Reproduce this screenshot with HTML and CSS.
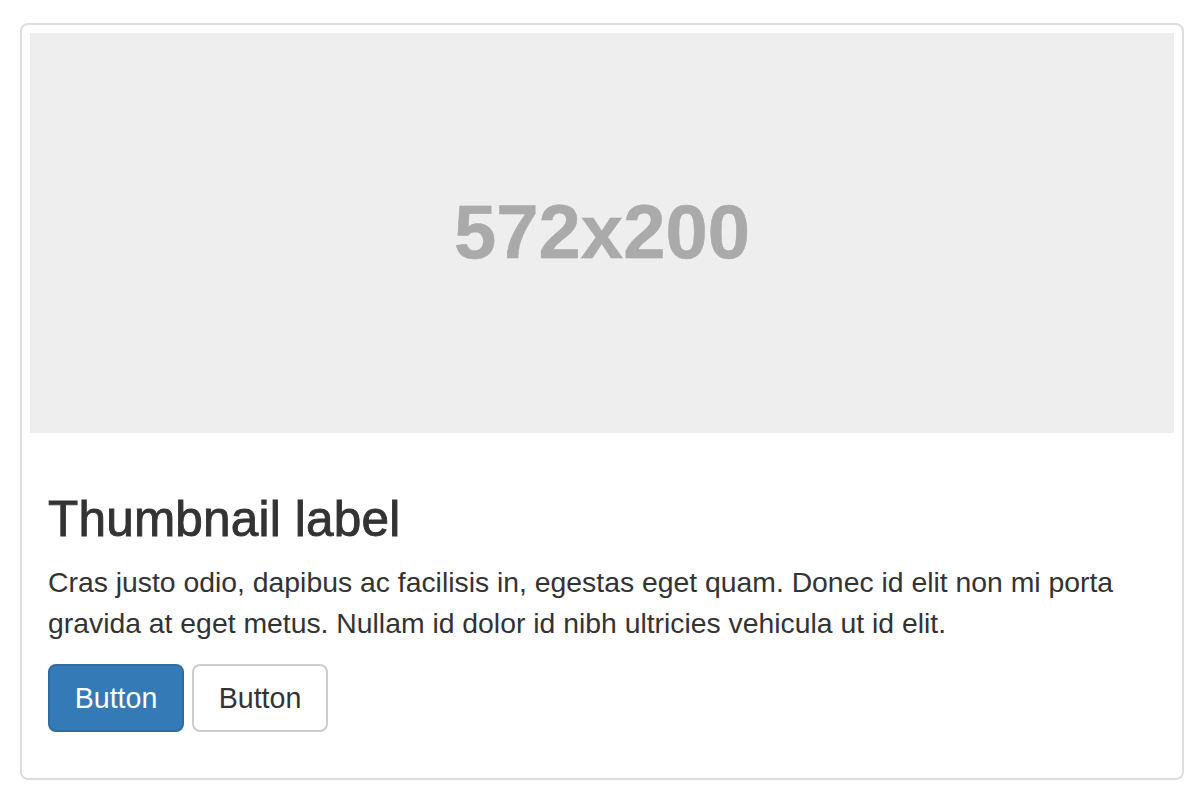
FILE: index.html
```html
<!DOCTYPE html>
<html>
<head>
<meta charset="utf-8">
<link rel="stylesheet" href="styles.css">
</head>
<body>
<div class="page">
  <div class="thumbnail">
    <div class="holder"><span class="holder-text">572x200</span></div>
    <div class="caption">
      <h3 class="title">Thumbnail label</h3>
      <p class="text">Cras justo odio, dapibus ac facilisis in, egestas eget quam. Donec id elit non mi porta gravida at eget metus. Nullam id dolor id nibh ultricies vehicula ut id elit.</p>
      <p class="actions"><a class="btn btn-primary">Button</a><a class="btn btn-default">Button</a></p>
    </div>
  </div>
</div>
</body>
</html>
```

FILE: styles.css
```css
* { box-sizing: border-box; }
html, body { margin: 0; padding: 0; background: #fff; }
body {
  font-family: "Liberation Sans", Arial, Helvetica, sans-serif;
  color: #333;
}
.page {
  padding: 23px 20px 0 20px;
}
.thumbnail {
  border: 2px solid #ddd;
  border-radius: 8px;
  padding: 8px;
  background: #fff;
}
.holder {
  height: 400px;
  background: #eee;
  display: flex;
  align-items: center;
  justify-content: center;
}
.holder-text {
  font-weight: bold;
  font-size: 76px;
  color: #aaa;
  margin-top: -3px;
  -webkit-text-stroke: 0.5px #aaa;
}
.caption {
  padding: 18px;
}
.title {
  margin: 41px 0 16px 0;
  font-size: 49.5px;
  font-weight: 500;
  line-height: 1.1;
  letter-spacing: 0.2px;
  -webkit-text-stroke: 0.9px #333;
}
.text {
  margin: 0 0 20px 0;
  font-size: 28.35px;
  line-height: 41px;
}
.actions {
  margin: 0 0 20px 0;
  display: flex;
  gap: 8px;
}
.btn {
  display: inline-block;
  font-size: 28.6px;
  line-height: 40px;
  padding: 12px 0;
  border: 2px solid transparent;
  border-radius: 8px;
  height: 68px;
  width: 136px;
  text-align: center;
}
.btn-primary {
  background: #337ab7;
  border-color: #2e6da4;
  color: #fff;
}
.btn-default {
  background: #fff;
  border-color: #ccc;
  color: #333;
}
```
